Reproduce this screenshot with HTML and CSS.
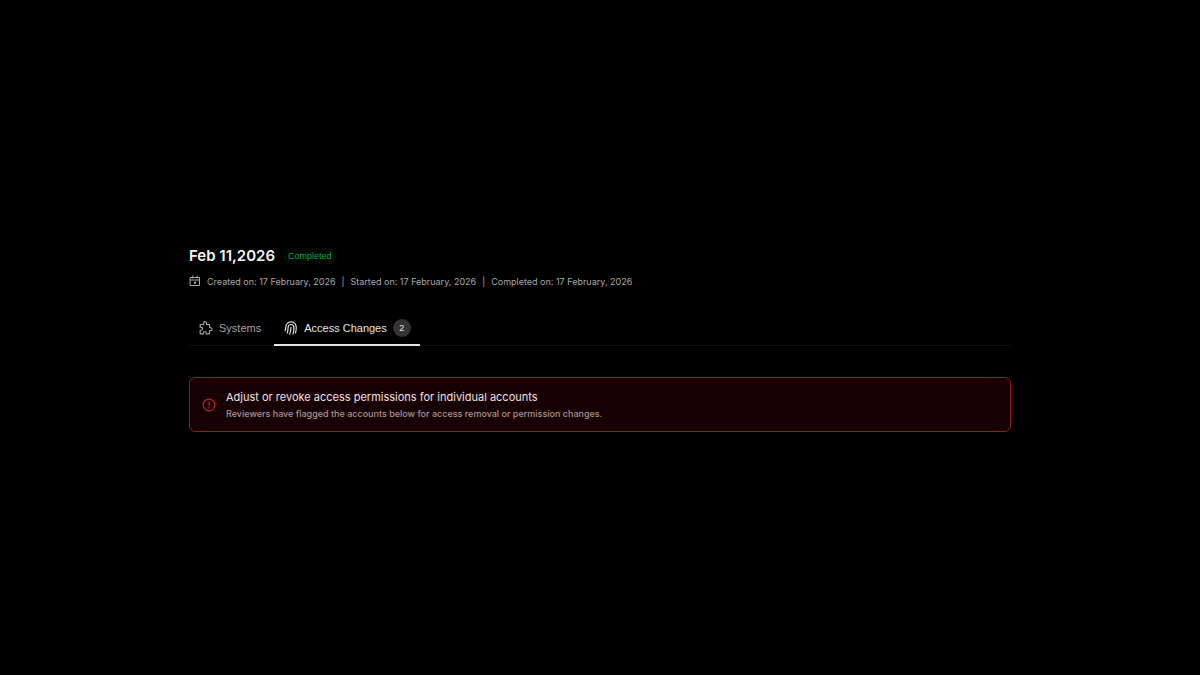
FILE: index.html
```
<!DOCTYPE html>
<html lang="en">
<head>
<meta charset="utf-8">
<meta name="viewport" content="width=device-width, initial-scale=1">
<title>Access review</title>
<link rel="stylesheet" href="styles.css">
</head>
<body>
<main class="review">
  <header class="header">
    <div class="heading">
      <h1 class="title">Feb 11,2026</h1>
      <span class="status">Completed</span>
    </div>
    <div class="meta">
      <svg class="meta-icon" viewBox="0 0 24 24" aria-hidden="true"><path d="M3 3h18v16H3zM3 8h18M7.500 0v4M16.500 0v4"/><path class="solid" d="M10 11.500h4v4h-4z"/></svg>
      <span>Created on: 17 February, 2026</span>
      <span>|</span>
      <span>Started on: 17 February, 2026</span>
      <span>|</span>
      <span>Completed on: 17 February, 2026</span>
    </div>
  </header>
  <div class="tabs" role="tablist">
    <button class="tab" type="button" role="tab" aria-selected="false">
      <svg class="tab-icon" viewBox="0 0 24 24" aria-hidden="true"><path d="M20 11.500L18 11V6H13V3.500a2.500 2.500 0 0 0-5 0V6H2V10.500h1.500a2.500 2.500 0 0 1 0 5.400H2V22H7.500v-1.500a2.500 2.500 0 0 1 5 0V22H18v-5l2-.5a2.500 2.500 0 0 0 0-5z"/></svg>
      <span>Systems</span>
    </button>
    <button class="tab tab-active" type="button" role="tab" aria-selected="true">
      <svg class="tab-icon" viewBox="0 0 24 24" aria-hidden="true"><path d="M2 16.500c.7-2 1-3.500 1-6a9 9 0 0 1 18 0c0 4-.3 7-1.200 10M5.500 20.500C6.600 17.500 7 15 7 11a5 5 0 0 1 10 0c0 4.500-.5 8-1.500 11.500M9.500 22.500c1.800-4 2.500-7 2.500-11.500"/></svg>
      <span>Access Changes</span>
      <span class="count">2</span>
    </button>
  </div>
  <section class="alert" role="alert">
    <svg class="alert-icon" viewBox="0 0 24 24" aria-hidden="true"><circle cx="12" cy="12" r="10"/><path d="M12 6.500v6.500M12 16v1"/></svg>
    <div>
      <h2 class="alert-title">Adjust or revoke access permissions for individual accounts</h2>
      <p class="alert-text">Reviewers have flagged the accounts below for access removal or permission changes.</p>
    </div>
  </section>
</main>
</body>
</html>
```
FILE: styles.css
```
* {
  box-sizing: border-box;
}

body {
  margin: 0;
  min-height: 100vh;
  display: flex;
  align-items: center;
  justify-content: center;
  background: #000;
  color: #f5f5f5;
  font-family: Inter, "Liberation Sans", sans-serif;
}

svg {
  flex: none;
  fill: none;
  stroke: currentColor;
  stroke-width: 2;
  stroke-linecap: round;
  stroke-linejoin: round;
}

h1,
h2,
p {
  margin: 0;
}

.review {
  width: 100%;
  max-width: 838px;
  padding: 2px 8px 0;
}

.header {
  display: grid;
  gap: 8px;
}

.heading {
  display: flex;
  align-items: center;
  gap: 8px;
}

.title {
  font-size: 15px;
  line-height: 20px;
  font-weight: 600;
}

.status {
  padding: 0 5px;
  border-radius: 4px;
  background: #000a03;
  color: #16a046;
  font-family: "Liberation Sans", Arial, sans-serif;
  font-size: 9px;
  line-height: 16px;
}

.meta {
  display: flex;
  align-items: center;
  gap: 6px;
  color: #a8a8a8;
  font-size: 9px;
  line-height: 16px;
}

.meta-icon {
  width: 12px;
  height: 12px;
  overflow: visible;
}

.solid {
  fill: currentColor;
  stroke: none;
}

.tabs {
  display: flex;
  gap: 4px;
  margin-top: 21px;
  border-bottom: 1px solid #101010;
}

.tab {
  display: flex;
  align-items: center;
  gap: 6px;
  height: 35px;
  margin-bottom: -1px;
  padding: 2px 9px 0 10px;
  border: 0;
  border-bottom: 2px solid transparent;
  background: none;
  color: #a3a3a3;
  font-family: "Liberation Sans", Arial, sans-serif;
  font-size: 11px;
  line-height: 16px;
}

.tab-active {
  border-bottom-color: #e5e5e5;
  color: #e5e5e5;
}

.tab-icon {
  width: 14px;
  height: 14px;
}

.count {
  width: 18px;
  border-radius: 9px;
  background: #333;
  font-size: 9px;
  line-height: 18px;
  text-align: center;
}

.alert {
  display: flex;
  align-items: center;
  gap: 10px;
  margin-top: 31px;
  padding: 11px 12px 9px;
  border: 1px solid #8a1c30;
  border-radius: 6px;
  background: #170003;
}

.alert-icon {
  width: 14px;
  height: 14px;
  color: #c81e2c;
}

.alert-title {
  color: #f0e0e2;
  font-size: 11px;
  line-height: 17px;
  font-weight: 400;
}

.alert-text {
  color: #a99496;
  font-size: 9px;
  line-height: 16px;
  font-weight: 500;
}
```
